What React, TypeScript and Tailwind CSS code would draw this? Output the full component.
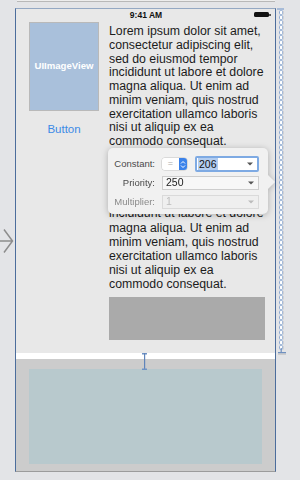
const para = [
  "Lorem ipsum dolor sit amet,",
  "consectetur adipiscing elit,",
  "sed do eiusmod tempor",
  "incididunt ut labore et dolore",
  "magna aliqua. Ut enim ad",
  "minim veniam, quis nostrud",
  "exercitation ullamco laboris",
  "nisi ut aliquip ex ea",
  "commodo consequat.",
];

function Caret() {
  return (
    <svg width="6" height="4" viewBox="0 0 6 4" className="mr-[4px]">
      <path d="M0 0.5h6L3 3.5z" fill="#555" />
    </svg>
  );
}

function ConstraintChain() {
  return (
    <svg width="9" height="348" viewBox="0 0 9 348">
      <defs>
        <pattern id="chain" x="0" y="2" width="9" height="5" patternUnits="userSpaceOnUse">
          <rect x="2.5" y="0.5" width="3.2" height="4" rx="1.2" fill="#fff" stroke="#8eaad2" strokeWidth="1" />
          <rect x="6.2" y="1" width="0.8" height="3.5" fill="#cfcfcf" />
        </pattern>
      </defs>
      <rect x="0" y="0.3" width="7" height="1.4" fill="#8eaad2" />
      <rect x="0" y="2" width="9" height="340" fill="url(#chain)" />
      <rect x="3.6" y="340" width="1.2" height="5" fill="#6f90c0" />
      <rect x="1" y="344" width="8" height="1.4" fill="#6f90c0" />
      <rect x="1" y="345.5" width="8" height="1.2" fill="#c4c4c4" />
    </svg>
  );
}

export default function App() {
  return (
    <div className="w-[300px] h-[480px] bg-[#e3e4e7] overflow-hidden" style={{ fontFamily: '"Liberation Sans", Arial, sans-serif' }}>
      <div className="ml-[17px] w-[258px] h-[2px] bg-[#ededed] border-b border-[#b8b8b8]" />

      <div className="flex mt-[6px]">
        {/* segue arrow */}
        <div className="w-[15px] pt-[220px]">
          <svg width="14" height="26" viewBox="0 0 14 26">
            <path d="M0 13h12.5M4 1.5l8.5 11.5L4 24.5" fill="none" stroke="#8d8d8d" strokeWidth="1.5" />
          </svg>
        </div>

        {/* scene frame */}
        <div className="relative w-[261px] h-[464px] border-t border-t-[#94a8c3] border-x border-x-[#4c6d9c] border-b border-b-[#9c9c9c] flex flex-col">
          <div className="relative h-[344px] bg-[#e8e8e8]">
            {/* status bar */}
            <div className="h-[13px] flex items-end justify-center text-[8.5px] font-bold text-[#111] pl-[1px]">9:41 AM</div>
            <div className="absolute left-[238px] top-[3px] flex items-center">
              <div className="w-[15px] h-[5px] rounded-[1.5px] bg-[#111]" />
              <div className="w-[1.5px] h-[2px] bg-[#555]" />
            </div>

            <div className="flex pl-[13px]">
              <div className="w-[70px] flex flex-col items-center">
                <div className="w-[70px] h-[89px] bg-[#a9c0db] border border-[#b9b9b9] flex items-center justify-center text-white text-[9.6px] font-bold">
                  UIImageView
                </div>
                <div className="mt-[10px] text-[11.5px] text-[#3c8ae6]">Button</div>
              </div>

              <div className="ml-[10px] w-[158px] pt-[3px] text-[12.3px] text-[#1c1c1c]">
                <div className="leading-[13.75px]">
                  {para.map((l) => (
                    <div key={l} className="whitespace-nowrap">{l}</div>
                  ))}
                </div>
                <div className="mt-[15px] leading-[14.2px]">
                  {para.map((l) => (
                    <div key={l} className="whitespace-nowrap">{l}</div>
                  ))}
                </div>
                <div className="mt-[5px] w-[156px] h-[43px] bg-[#aaaaaa]" />
              </div>
            </div>

            {/* constraint popover */}
            <div className="absolute left-[92px] top-[139px] w-[160px] h-[66px] drop-shadow-[0_1px_3px_rgba(0,0,0,0.25)]">
              <div className="absolute right-[-5px] top-[29px] w-[10px] h-[10px] rotate-45 bg-[#f1f1f1]" />
              <div className="relative h-full rounded-[5px] bg-[#f1f1f1] flex flex-col pt-[8px] text-[9.5px] text-[#4a4a4a]">
                <div className="flex items-center h-[16px]">
                  <div className="w-[47px] text-right">Constant:</div>
                  <div className="ml-[7px] flex h-[12px] rounded-[3px] overflow-hidden shadow-[0_0_0_0.5px_#c4c4c4]">
                    <div className="w-[17px] bg-white flex items-center justify-center text-[#aaa] text-[9px]">=</div>
                    <div className="w-[8px] bg-[#3b82ea] flex items-center justify-center">
                      <svg width="6" height="9" viewBox="0 0 6 9">
                        <path d="M1 3.5L3 1.5L5 3.5M1 5.5L3 7.5L5 5.5" fill="none" stroke="#fff" strokeWidth="1" />
                      </svg>
                    </div>
                  </div>
                  <div className="ml-[8px] w-[64px] h-[16px] border-2 border-[#7eaae3] rounded-[2px] bg-white flex items-center justify-between">
                    <span className="ml-[1px] px-[1px] bg-[#b3cdf0] text-[10.5px] text-[#111] leading-[12px]">206</span>
                    <Caret />
                  </div>
                </div>
                <div className="flex items-center h-[14px] mt-[4px]">
                  <div className="w-[47px] text-right">Priority:</div>
                  <div className="ml-[7px] w-[97px] h-[14px] border border-[#cdcdcd] bg-[#f7f7f7] flex items-center justify-between">
                    <span className="ml-[3px] text-[10.5px] text-[#222]">250</span>
                    <Caret />
                  </div>
                </div>
                <div className="flex items-center h-[14px] mt-[5px]">
                  <div className="w-[47px] text-right text-[#8a8a8a]">Multiplier:</div>
                  <div className="ml-[7px] w-[97px] h-[14px] border border-[#dadada] bg-[#efefef] flex items-center justify-between">
                    <span className="ml-[3px] text-[10.5px] text-[#bdbdbd]">1</span>
                    <svg width="6" height="4" viewBox="0 0 6 4" className="mr-[4px]">
                      <path d="M0 0.5h6L3 3.5z" fill="#bbb" />
                    </svg>
                  </div>
                </div>
              </div>
            </div>
          </div>

          <div className="h-[6px] bg-white" />
          <div className="flex-1 bg-[#cccccc] pl-[13px] pt-[10px]">
            <div className="w-[233px] h-[95px] bg-[#b8c9cd]" />
          </div>

          {/* vertical spacing constraint */}
          <div className="absolute left-[126px] top-[344px] w-[5px] h-[17px]">
            <svg width="5" height="17" viewBox="0 0 5 17">
              <rect x="0" y="0" width="5" height="1.5" fill="#6f93c6" />
              <rect x="2" y="0" width="1.2" height="17" fill="#5f84b9" />
              <rect x="0" y="15.5" width="5" height="1.5" fill="#6f93c6" />
            </svg>
          </div>
        </div>

        <div className="pl-[1px]">
          <ConstraintChain />
        </div>
      </div>
    </div>
  );
}
